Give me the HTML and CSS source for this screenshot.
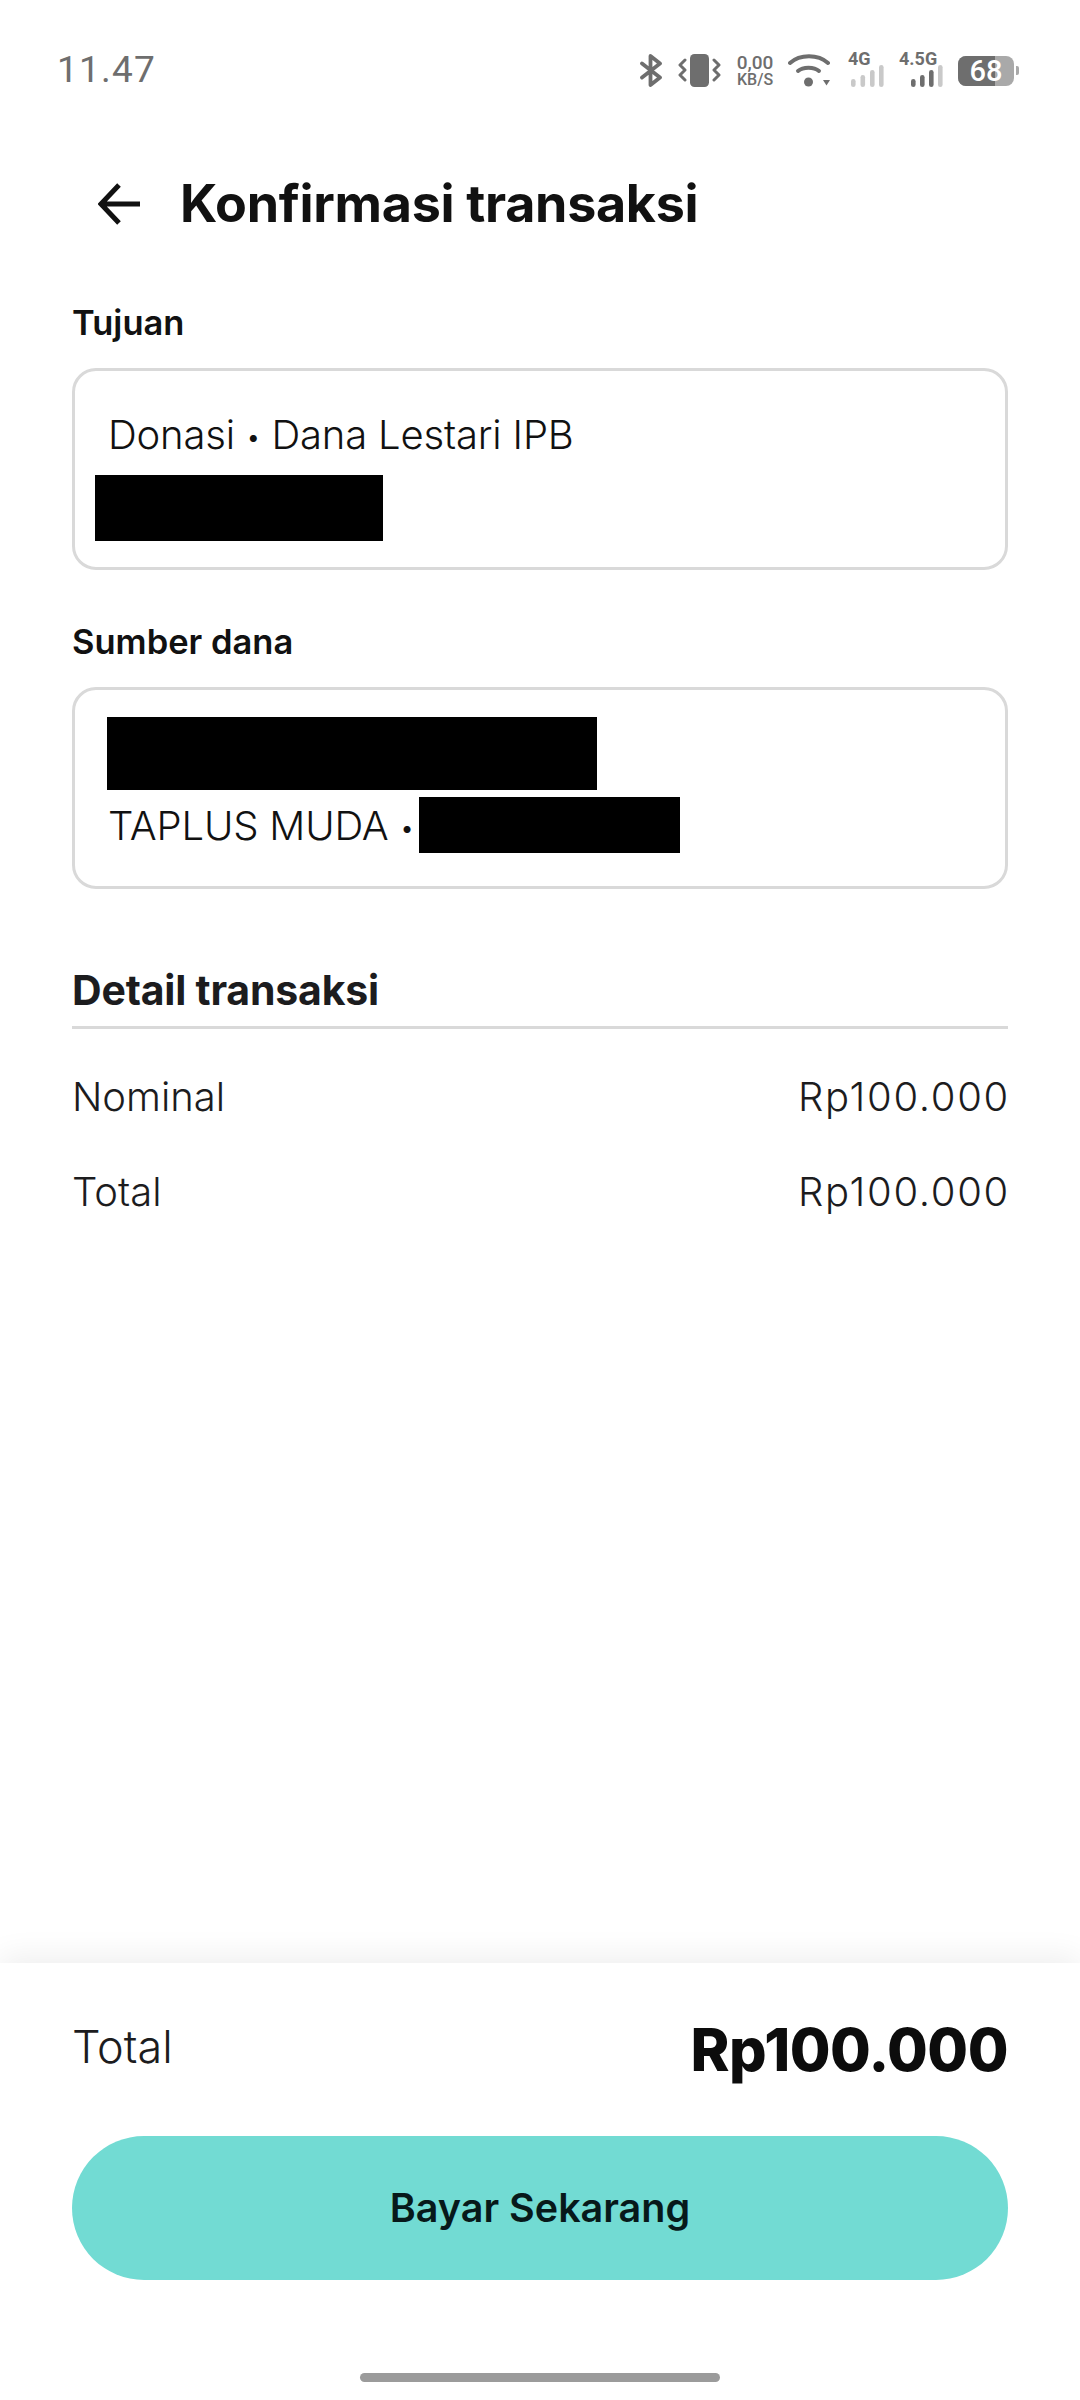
FILE: index.html
```html
<!DOCTYPE html>
<html lang="id">
<head>
<meta charset="utf-8">
<title>Konfirmasi transaksi</title>
<link rel="stylesheet" href="styles.css">
</head>
<body>
<div class="phone">
  <div class="status">
    <span class="time">11.47</span>
    <div class="status-icons">
      <svg class="ic-bt" width="24" height="33" viewBox="0 0 24 33"><path d="M3 9.5 L21 23.5 L11.5 31 V2 L21 9.5 L3 23.5" fill="none" stroke="#6e6e6e" stroke-width="3.8" stroke-linecap="round" stroke-linejoin="round"/></svg>
      <svg class="ic-vib" width="43" height="33" viewBox="0 0 43 33"><rect x="12" y="0" width="19" height="33" rx="4.5" fill="#6e6e6e"/><path d="M7 6 L2 11 L7 16 L2 21 L7 26" fill="none" stroke="#6e6e6e" stroke-width="3" stroke-linecap="round" stroke-linejoin="round"/><path d="M36 6 L41 11 L36 16 L41 21 L36 26" fill="none" stroke="#6e6e6e" stroke-width="3" stroke-linecap="round" stroke-linejoin="round"/></svg>
      <div class="speed"><span>0,00</span><span>KB/S</span></div>
      <svg class="ic-wifi" width="42" height="34" viewBox="0 0 42 34"><path d="M2 9 C12 0 30 0 40 9" fill="none" stroke="#6e6e6e" stroke-width="4" stroke-linecap="round"/><path d="M10 17 C15 12.5 26 12.5 31 17" fill="none" stroke="#6e6e6e" stroke-width="4" stroke-linecap="round"/><circle cx="20.5" cy="28" r="4.5" fill="#6e6e6e"/><path d="M35 26 H42 L38.5 31.5 Z" fill="#6e6e6e"/></svg>
      <div class="net net-4g">
        <span>4G</span>
        <svg width="36" height="22" viewBox="0 0 36 22"><rect x="3" y="14" width="4.6" height="8" rx="2.3" fill="#c9c9c9"/><rect x="12.500" y="10" width="4.6" height="12" rx="2.3" fill="#c9c9c9"/><rect x="22" y="5" width="4.6" height="17" rx="2.3" fill="#c9c9c9"/><rect x="31" y="0" width="4.6" height="22" rx="2.3" fill="#c9c9c9"/></svg>
      </div>
      <div class="net net-45g">
        <span>4.5G</span>
        <svg width="32" height="22" viewBox="0 0 32 22"><rect x="0" y="14" width="4.6" height="8" rx="2.3" fill="#6e6e6e"/><rect x="9" y="10" width="4.6" height="12" rx="2.3" fill="#6e6e6e"/><rect x="18" y="5" width="4.6" height="17" rx="2.3" fill="#6e6e6e"/><rect x="27" y="0" width="4.6" height="22" rx="2.3" fill="#c9c9c9"/></svg>
      </div>
      <div class="battery">
        <div class="batt-body"><span class="batt-fill"></span><span class="batt-num">68</span></div>
        <span class="batt-tip"></span>
      </div>
    </div>
  </div>

  <header class="topbar">
    <svg class="back" width="44" height="42" viewBox="0 0 44 42"><path d="M42 21 H4 M21 2 L3 21 L21 40" fill="none" stroke="#111" stroke-width="5"/></svg>
    <h1 class="title">Konfirmasi transaksi</h1>
  </header>

  <main class="content">
    <h2 class="label">Tujuan</h2>
    <div class="card card-dest">
      <p class="card-text">Donasi <span class="dot">•</span> Dana Lestari IPB</p>
      <div class="redact redact-a"></div>
    </div>

    <h2 class="label label-next">Sumber dana</h2>
    <div class="card card-source">
      <div class="redact redact-b"></div>
      <div class="source-row">
        <p class="card-text">TAPLUS MUDA <span class="dot">•</span></p>
        <div class="redact redact-c"></div>
      </div>
    </div>

    <h2 class="section">Detail transaksi</h2>
    <div class="row row-first"><span>Nominal</span><span class="amount">Rp100.000</span></div>
    <div class="row"><span>Total</span><span class="amount">Rp100.000</span></div>
  </main>

  <footer class="footer">
    <div class="sum"><span class="sum-label">Total</span><span class="sum-value">Rp100.000</span></div>
    <button class="pay">Bayar Sekarang</button>
    <div class="home"></div>
  </footer>
</div>
</body>
</html>
```
FILE: styles.css
```css
* { box-sizing: border-box; }
html, body { margin: 0; padding: 0; background: #fff; }
body { font-family: Inter, "Liberation Sans", sans-serif; color: #111; }
h1, h2, p { margin: 0; }

.phone { width: 1080px; height: 2400px; display: flex; flex-direction: column; overflow: hidden; }

.status { height: 104px; padding: 50px 61px 0 57px; display: flex; justify-content: space-between; align-items: flex-start; flex: none; }
.time { font-family: Roboto, sans-serif; font-size: 37px; line-height: 40px; color: #6e6e6e; letter-spacing: 1.2px; }
.status-icons { display: flex; align-items: flex-start; margin-top: 4px; }
.ic-vib { margin-left: 15px; }
.speed { margin-left: 14px; width: 40px; display: flex; flex-direction: column; font-family: Roboto, sans-serif; font-weight: 500; color: #6e6e6e; font-size: 16px; line-height: 16px; align-items: center; }
.speed span:first-child { font-size: 19px; line-height: 18px; }
.ic-wifi { margin-left: 13px; }
.net { display: flex; flex-direction: column; margin-top: -3px; font-family: Roboto, sans-serif; font-weight: 700; color: #6e6e6e; }
.net span { font-size: 18px; line-height: 16px; }
.net svg { margin-top: -2px; }
.net-4g { margin-left: 18px; width: 36px; align-items: flex-start; }
.net-45g { margin-left: 15px; width: 44px; align-items: flex-start; }
.net-45g svg { margin-left: 12px; }
.battery { margin-left: 15px; display: flex; align-items: center; height: 33px; }
.batt-body { position: relative; width: 56px; height: 30px; border-radius: 8px; background: #a9a9a9; display: flex; align-items: center; justify-content: center; }
.batt-fill { position: absolute; left: 0; top: 0; bottom: 0; width: 37px; border-radius: 8px 0 0 8px; background: #6e6e6e; }
.batt-num { position: relative; font-family: Roboto, sans-serif; font-size: 29px; line-height: 30px; color: #fff; font-weight: 500; }
.batt-tip { width: 3px; height: 9px; margin-left: 2px; border-radius: 0 2px 2px 0; background: #a9a9a9; }

.topbar { height: 100px; margin-top: 50px; display: flex; align-items: center; padding-left: 98px; flex: none; }
.back { flex: none; }
.title { margin-left: 38px; font-size: 52px; line-height: 64px; font-weight: 700; letter-spacing: -0.3px; color: #111; }

.content { flex: 1; padding: 0 72px; display: flex; flex-direction: column; }
.label { font-size: 34.5px; line-height: 40px; font-weight: 600; color: #111; }
.content > .label:first-child { margin-top: 49px; }
.card { height: 202px; margin-top: 25px; border: 3px solid #d9d9d9; border-radius: 24px; padding: 0 33px; }
.card-text { font-size: 40px; line-height: 48px; font-weight: 300; color: #111; letter-spacing: -0.18px; }
.dot { font-size: 26px; vertical-align: 3px; }
.card-dest { padding-top: 40px; }
.redact { background: #000; }
.redact-a { width: 288px; height: 66px; margin-left: -13px; margin-top: 14px; }
.card-source { padding-top: 27px; }
.redact-b { width: 490px; height: 73px; margin-left: -1px; }
.source-row { display: flex; align-items: center; margin-top: 7px; }
.source-row .card-text { margin-top: 4px; }
.redact-c { width: 261px; height: 56px; margin-left: 5px; }
.label-next { margin-top: 52px; }

.section { margin-top: 77px; padding-bottom: 12px; border-bottom: 3px solid #d9d9d9; font-size: 41px; line-height: 48px; font-weight: 700; color: #1c1c1e; letter-spacing: -0.2px; }
.row { display: flex; justify-content: space-between; font-size: 40px; line-height: 48px; font-weight: 300; color: #1c1c1e; margin-top: 47px; }
.row-first { margin-top: 44px; }
.amount { letter-spacing: 1.7px; margin-right: -2px; }

.footer { flex: none; height: 437px; padding: 0 72px; background: #fff; box-shadow: 0 -6px 30px rgba(0,0,0,0.07); display: flex; flex-direction: column; position: relative; }
.sum { display: flex; justify-content: space-between; align-items: flex-start; height: 173px; padding-top: 51px; }
.sum-label { font-size: 45px; line-height: 60px; font-weight: 300; color: #1c1c1e; margin-top: 3px; }
.sum-value { font-size: 59px; line-height: 72px; font-weight: 800; color: #0c0c0c; letter-spacing: -0.5px; }
.pay { height: 144px; width: 100%; border: 0; border-radius: 72px; background: #72dbd3; font-family: inherit; font-size: 39.5px; font-weight: 600; color: #07191a; padding: 0; }
.home { width: 360px; height: 9px; margin: 93px auto 0; border-radius: 5px; background: #9b9b9b; }
```
